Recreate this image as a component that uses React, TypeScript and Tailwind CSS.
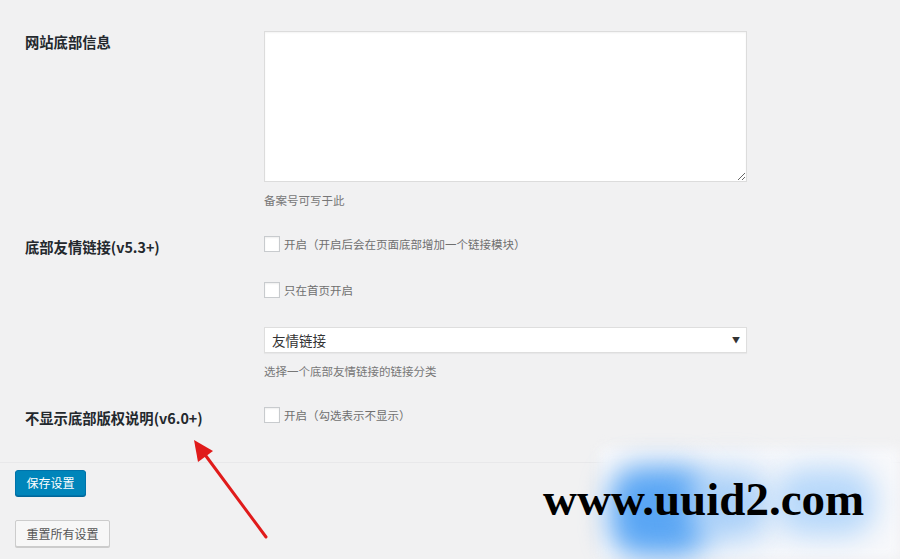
import React from "react";

const cjk = { fontFamily: '"Noto Sans CJK SC", "Noto Sans", sans-serif' };

function Checkbox({ label }: { label: string }) {
  return (
    <label className="flex h-[16px] items-center gap-[4px] text-[11.5px] leading-[16px] text-[#6f6f6f]">
      <span className="block h-[16px] w-[16px] shrink-0 border border-[#c8cbce] bg-white shadow-[inset_0_1px_2px_rgba(0,0,0,0.07)]" />
      <span>{label}</span>
    </label>
  );
}

function Label({ children }: { children: React.ReactNode }) {
  return (
    <div className="w-[264px] shrink-0 pl-[25px] pt-[1px] text-[14.3px] font-bold leading-[20px] text-[#23282d]">
      {children}
    </div>
  );
}

export default function App() {
  return (
    <div className="relative h-[559px] w-full overflow-hidden bg-[#f1f1f2]" style={cjk}>
      <div className="pt-[31px]">
        {/* 网站底部信息 */}
        <div className="flex items-start">
          <Label>网站底部信息</Label>
          <div>
            <textarea
              className="block h-[151px] w-[483px] resize border border-[#dcdcdc] bg-white shadow-[inset_0_1px_2px_rgba(0,0,0,0.05)] outline-none"
              defaultValue=""
            />
            <p className="mt-[11px] text-[11.5px] leading-[14px] text-[#777]">备案号可写于此</p>
          </div>
        </div>

        {/* 底部友情链接 */}
        <div className="mt-[29px] flex items-start">
          <Label>底部友情链接(v5.3+)</Label>
          <div>
            <Checkbox label="开启（开启后会在页面底部增加一个链接模块）" />
            <div className="mt-[30px]">
              <Checkbox label="只在首页开启" />
            </div>
            <div className="mt-[29px] flex h-[26px] w-[483px] items-center justify-between border border-[#dedede] bg-white pl-[7px] pr-[6px] shadow-[0_1px_1px_rgba(0,0,0,0.04)]">
              <span className="text-[13.5px] text-[#333]">友情链接</span>
              <span className="text-[8px] text-[#333]">▼</span>
            </div>
            <p className="mt-[11px] text-[11.5px] leading-[14px] text-[#777]">选择一个底部友情链接的链接分类</p>
          </div>
        </div>

        {/* 不显示底部版权说明 */}
        <div className="mt-[29px] flex items-start">
          <Label>不显示底部版权说明(v6.0+)</Label>
          <div>
            <Checkbox label="开启（勾选表示不显示）" />
          </div>
        </div>

        <div className="mt-[34px] h-px w-full bg-[#e8e8ea]" />

        <div className="pl-[15px]">
          <button className="mt-[7px] block h-[26px] w-[71px] rounded-[3px] border border-[#0073aa] bg-[#0085ba] text-[12px] text-white shadow-[0_1px_0_#006799]">
            保存设置
          </button>
          <button className="mt-[24px] block h-[27px] w-[95px] rounded-[2px] border border-[#cccccc] bg-[#f7f7f7] text-[12px] text-[#555] shadow-[0_1px_0_#ccc]">
            重置所有设置
          </button>
        </div>
      </div>

      {/* red arrow */}
      <svg className="pointer-events-none absolute left-0 top-0" width="900" height="559">
        <line x1="266" y1="537" x2="203" y2="452" stroke="#e01b1b" strokeWidth="3" strokeLinecap="round" />
        <polygon points="194,440 198,462 213,451" fill="#e01b1b" />
      </svg>

      {/* watermark */}
      <div className="pointer-events-none absolute left-[600px] top-[448px] h-[111px] w-[300px] bg-[#f7f8fb] blur-[6px]" />
      <div className="pointer-events-none absolute left-[610px] top-[466px] h-[90px] w-[100px] rounded-[30px] bg-[#5aa6f4] blur-[14px]" />
      <div className="pointer-events-none absolute left-[690px] top-[470px] h-[70px] w-[80px] rounded-[30px] bg-[#a8cff8] blur-[16px]" />
      <div className="pointer-events-none absolute left-[775px] top-[468px] h-[68px] w-[100px] rounded-[30px] bg-[#b7d8fa] blur-[14px]" />
      <div
        className="pointer-events-none absolute left-[543px] top-[471px] text-[47px] font-bold leading-[56px] text-black"
        style={{ fontFamily: '"Liberation Serif", serif' }}
      >
        www.uuid2.com
      </div>
    </div>
  );
}
